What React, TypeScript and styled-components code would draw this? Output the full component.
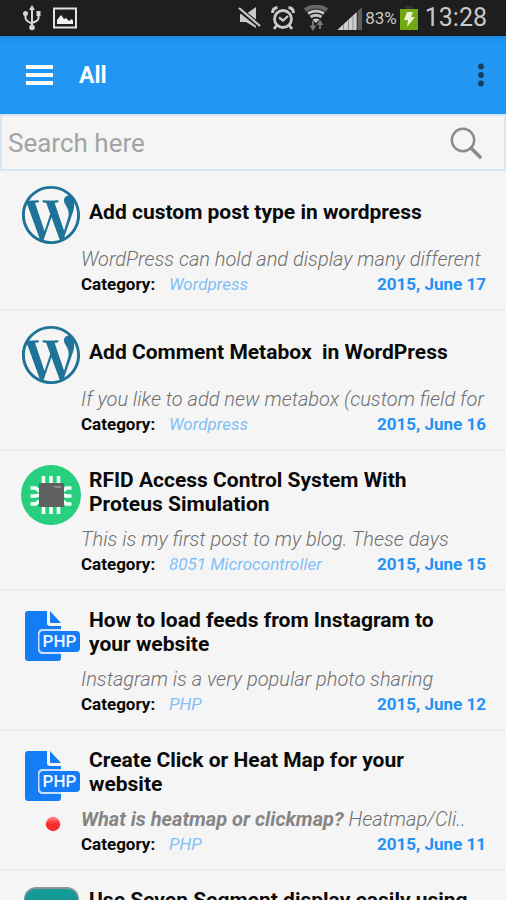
import React from 'react';
import styled, { createGlobalStyle } from 'styled-components';
import { FaWordpressSimple } from 'react-icons/fa';

const GlobalStyle = createGlobalStyle`
  *, *::before, *::after { box-sizing: border-box; }
  body { margin: 0; background: #f5f5f5; font-family: Roboto, "Liberation Sans", sans-serif; }
`;

const Screen = styled.div`
  display: flex;
  flex-direction: column;
  height: 100vh;
  overflow: hidden;
  background: #f5f5f5;
`;

const StatusBar = styled.div`
  display: flex;
  flex: none;
  align-items: center;
  justify-content: space-between;
  height: 36px;
  padding: 0 19px 0 22px;
  background: #1e1e1e;
  color: #c9c9c9;
  border-bottom: 1px solid #10171d;
`;

const StatusGroup = styled.div<{ $gap: number }>`
  display: flex;
  align-items: center;
  gap: ${(p) => p.$gap}px;
`;

const Battery = styled.div`
  display: flex;
  align-items: center;
  gap: 3px;
  margin-left: -7px;
  font-size: 17px;
`;

const Clock = styled.time`
  font-size: 25px;
  margin-left: -2px;
`;

const AppBar = styled.header`
  display: flex;
  flex: none;
  align-items: center;
  height: 78px;
  padding: 0 15px 0 20px;
  background: linear-gradient(#1f8be6, #2196f3 8px);
  color: #fff;
`;

const IconButton = styled.button`
  display: flex;
  align-items: center;
  justify-content: center;
  padding: 6px;
  border: 0;
  background: none;
  color: inherit;
  cursor: pointer;
`;

const Heading = styled.h1`
  flex: 1;
  margin: 0 0 0 20px;
  padding-top: 2px;
  font-size: 23px;
  font-weight: 700;
  line-height: 28px;
`;

const SearchBar = styled.form`
  display: flex;
  flex: none;
  align-items: center;
  height: 57px;
  padding: 0 16px 0 6px;
  border: 2px solid #d6e6f4;
`;

const SearchInput = styled.input`
  flex: 1;
  min-width: 0;
  padding: 0;
  border: 0;
  outline: 0;
  background: none;
  font-family: inherit;
  font-size: 26px;
  color: #444;
  &::placeholder { color: #a3a3a3; opacity: 1; }
`;

const PostList = styled.ul`
  flex: 1;
  min-height: 0;
  margin: 0;
  padding: 0;
  overflow-y: auto;
  scrollbar-width: none;
  list-style: none;
`;

const PostRow = styled.li`
  display: grid;
  grid-template-columns: 60px 1fr;
  grid-template-rows: 61px 26px 24px;
  height: 140px;
  padding: 14px 20px 12px 21px;
  border-bottom: 2px solid #ececec;
`;

const Thumb = styled.div`
  width: 60px;
  height: 60px;
  svg { display: block; }
`;

const Title = styled.h2`
  align-self: center;
  margin: 0;
  padding: 0 10px 8px 8px;
  font-size: 21px;
  font-weight: 700;
  line-height: 24px;
  color: #0a0a0a;
  white-space: pre-wrap;
`;

const Marker = styled.div`
  display: flex;
  align-items: center;
  padding: 10px 0 0 24px;
`;

const Excerpt = styled.p`
  grid-column: 2;
  align-self: center;
  margin: 0 -16px 0 0;
  overflow: hidden;
  font-size: 20px;
  font-weight: 300;
  font-style: italic;
  line-height: 24px;
  color: #6f6f6f;
  white-space: nowrap;
  strong { font-weight: 700; color: #858585; }
`;

const Meta = styled.div`
  grid-column: 2;
  display: flex;
  align-items: center;
  font-size: 17px;
  line-height: 24px;
  font-weight: 700;
`;

const Label = styled.span`
  width: 88px;
  color: #0a0a0a;
`;

const CategoryLink = styled.a`
  flex: 1;
  font-weight: 400;
  font-style: italic;
  color: #82bff6;
  text-decoration: none;
`;

const PostDate = styled.time`
  color: #2391f5;
`;

const UsbIcon = () => (
  <svg width="20" height="26" viewBox="0 0 20 26" fill="none" stroke="#d6d6d6" strokeWidth="2">
    <path d="M10 3v19M3.500 9v4q0 2 2 3l4.500 3M16.500 9v4q0 2-2 3L10 18" />
    <path d="M10 0l3 5H7z" fill="#d6d6d6" stroke="none" />
    <circle cx="10" cy="22.500" r="2.800" fill="#d6d6d6" stroke="none" />
    <circle cx="3.500" cy="8.500" r="2.500" fill="#d6d6d6" stroke="none" />
    <path d="M14.500 6h4v5h-4z" fill="#d6d6d6" stroke="none" />
  </svg>
);

const PictureIcon = () => (
  <svg width="24" height="22" viewBox="0 0 24 22">
    <rect x="1" y="1.500" width="22" height="19" fill="none" stroke="#e2e2e2" strokeWidth="2" />
    <path d="M4 17v-4l4-5 3 4 2-1 3 3 3-2 1 2v3z" fill="#f2f2f2" />
  </svg>
);

const MuteIcon = () => (
  <svg width="24" height="24" viewBox="0 0 24 24">
    <path d="M2 8h6l10-7v21l-10-6H2z" fill="#c9c9c9" />
    <path d="M1 3l21 17" stroke="#1e1e1e" strokeWidth="5" />
    <path d="M1 2l21 18" stroke="#c9c9c9" strokeWidth="2.200" />
  </svg>
);

const AlarmIcon = () => (
  <svg width="24" height="24" viewBox="0 0 24 24" fill="none" stroke="#c9c9c9">
    <circle cx="12" cy="13" r="8.500" strokeWidth="2.800" />
    <path d="M8 11.500l4 3 5-4.500" strokeWidth="2.200" />
    <path d="M1.500 7q0-5 5-5.500M22.500 7q0-5-5-5.500" strokeWidth="3" />
    <path d="M6 19l-3 4M18 19l3 4" strokeWidth="2.800" />
  </svg>
);

const WifiIcon = () => (
  <svg width="24" height="26" viewBox="0 0 24 26" fill="none">
    <path d="M1 5q11-7 22 0" stroke="#666" strokeWidth="4" />
    <path d="M4 8.500q8-5 16 0M6.500 12q5.500-3.500 11 0" stroke="#c4c4c4" strokeWidth="3" />
    <path d="M8.500 14.500q3.500-2 7 0L12 18z" fill="#c4c4c4" />
    <path d="M9 16v7M16 24v-7" stroke="#777" strokeWidth="2" />
    <path d="M5.500 20.500h7L9 26zM12.500 20h7L16 14.500z" fill="#777" />
  </svg>
);

const SignalIcon = () => (
  <svg width="26" height="24" viewBox="0 0 26 24">
    <path d="M0 24L19.500 6v18z" fill="#8e8e8e" />
    <path d="M1 24h5v-5zM7 24h4v-9.500l-4 3.500zM12 24h3.500V10.500L12 13.500zM16.500 24h3V6.500l-3 3z" fill="#cfcfcf" />
    <path d="M20.500 24H25V1l-4.500 4.500z" fill="#5d5d5d" />
  </svg>
);

const BatteryIcon = () => (
  <svg width="18" height="26" viewBox="0 0 18 26">
    <path d="M5 1h8v3H5z" fill="#333" />
    <path d="M0 4h18v21H0z" fill="#72a811" />
    <path d="M7 7h6l-2 5h4L7 22l1-7H4z" fill="#e9f4d2" />
  </svg>
);

const MenuIcon = () => (
  <svg width="27" height="20" viewBox="0 0 27 20" fill="#fff">
    <path d="M0 0h27v4H0zM0 8h27v4H0zM0 16h27v4H0z" />
  </svg>
);

const MoreIcon = () => (
  <svg width="8" height="24" viewBox="0 0 8 24" fill="#163f60">
    <circle cx="4" cy="3.500" r="2.900" />
    <circle cx="4" cy="12" r="2.900" />
    <circle cx="4" cy="20.500" r="2.900" />
  </svg>
);

const SearchIcon = () => (
  <svg width="32" height="32" viewBox="0 0 32 32" fill="none" stroke="#8b8b8b">
    <circle cx="13" cy="13" r="11.200" strokeWidth="2.400" />
    <path d="M21 21l9 9" strokeWidth="3.600" strokeLinecap="round" />
  </svg>
);

const ChipIcon = () => (
  <svg width="60" height="60" viewBox="0 0 60 60">
    <circle cx="30" cy="30" r="30" fill="#27cf7e" />
    <g fill="none" stroke="#f3fff8" strokeWidth="3.600">
      <path d="M22.500 11v38M30 11v38M37.500 11v38" />
      <path d="M9.500 23h5l4 3M9.500 31h5l4-1M9.500 39h5l4-3M50.500 23h-5l-4 3M50.500 31h-5l-4-1M50.500 39h-5l-4-3" />
    </g>
    <rect x="18" y="18" width="25" height="24" rx="1" fill="#5f6062" />
    <path d="M31 21h9v2h-5z" fill="#8a8a8c" />
  </svg>
);

const PhpIcon = () => (
  <svg width="60" height="60" viewBox="0 0 60 60">
    <path d="M7 6h19v12q0 3 3 3h11v32q0 3-3 3H7q-3 0-3-3V9q0-3 3-3z" fill="#157cf8" />
    <path d="M29 6l11 12H30q-1 0-1-1z" fill="#157cf8" />
    <rect x="17" y="24" width="43" height="25" rx="5" fill="#f5f5f5" />
    <path d="M40 24H22q-5 0-5 5v15q0 5 5 5h18z" fill="#c8e0fb" />
    <rect x="18.500" y="26" width="40.500" height="21" rx="4" fill="#157cf8" />
    <text x="38.500" y="42" textAnchor="middle" fontFamily="Roboto, sans-serif" fontSize="17" fontWeight="500" fill="#eef6ff">PHP</text>
  </svg>
);

const DisplayIcon = () => (
  <svg width="60" height="60" viewBox="0 0 60 60">
    <defs>
      <linearGradient id="teal" x1="0" y1="0" x2="0" y2="1">
        <stop offset="0" stopColor="#159d9b" />
        <stop offset="1" stopColor="#0b7f7e" />
      </linearGradient>
    </defs>
    <rect x="3" y="2" width="55" height="58" rx="12" fill="#8b9696" />
    <rect x="4" y="4" width="53" height="55" rx="11" fill="url(#teal)" />
  </svg>
);

const RecordDot = () => (
  <svg width="16" height="16" viewBox="0 0 16 16">
    <defs>
      <linearGradient id="red" x1="0" y1="0" x2="0" y2="1">
        <stop offset="0" stopColor="#ff8a8a" />
        <stop offset="0.500" stopColor="#fb2a2a" />
        <stop offset="1" stopColor="#ee3030" />
      </linearGradient>
    </defs>
    <circle cx="8" cy="8" r="7.200" fill="url(#red)" />
  </svg>
);

type Post = {
  icon: React.ReactNode;
  title: string;
  excerpt: React.ReactNode;
  category: string;
  date: string;
  marked?: boolean;
};

const wordpress = <FaWordpressSimple size={60} color="#1f7399" />;

const posts: Post[] = [
  { icon: wordpress, title: 'Add custom post type in wordpress', excerpt: 'WordPress can hold and display many different', category: 'Wordpress', date: '2015, June 17' },
  { icon: wordpress, title: 'Add Comment Metabox  in WordPress', excerpt: 'If you like to add new metabox (custom field for', category: 'Wordpress', date: '2015, June 16' },
  { icon: <ChipIcon />, title: 'RFID Access Control System With\nProteus Simulation', excerpt: 'This is my first post to my blog. These days', category: '8051 Microcontroller', date: '2015, June 15' },
  { icon: <PhpIcon />, title: 'How to load feeds from Instagram to\nyour website', excerpt: 'Instagram is a very popular photo sharing', category: 'PHP', date: '2015, June 12' },
  { icon: <PhpIcon />, title: 'Create Click or Heat Map for your\nwebsite', excerpt: <><strong>What is heatmap or clickmap?</strong> Heatmap/Cli..</>, category: 'PHP', date: '2015, June 11', marked: true },
  { icon: <DisplayIcon />, title: 'Use Seven Segment display easily using\n ', excerpt: '', category: '', date: '' },
];

const PostItem = ({ post }: { post: Post }) => (
  <PostRow>
    <Thumb>{post.icon}</Thumb>
    <Title>{post.title}</Title>
    {post.marked && <Marker><RecordDot /></Marker>}
    <Excerpt>{post.excerpt}</Excerpt>
    {post.category && (
      <Meta>
        <Label>Category:</Label>
        <CategoryLink href="#">{post.category}</CategoryLink>
        <PostDate>{post.date}</PostDate>
      </Meta>
    )}
  </PostRow>
);

export default function App() {
  return (
    <Screen>
      <GlobalStyle />
      <StatusBar>
        <StatusGroup $gap={11}>
          <UsbIcon />
          <PictureIcon />
        </StatusGroup>
        <StatusGroup $gap={9}>
          <MuteIcon />
          <AlarmIcon />
          <WifiIcon />
          <SignalIcon />
          <Battery>83%<BatteryIcon /></Battery>
          <Clock>13:28</Clock>
        </StatusGroup>
      </StatusBar>
      <AppBar>
        <IconButton type="button" aria-label="Open menu"><MenuIcon /></IconButton>
        <Heading>All</Heading>
        <IconButton type="button" aria-label="More options"><MoreIcon /></IconButton>
      </AppBar>
      <SearchBar onSubmit={(e) => e.preventDefault()}>
        <SearchInput type="text" placeholder="Search here" aria-label="Search here" />
        <IconButton type="submit" aria-label="Search"><SearchIcon /></IconButton>
      </SearchBar>
      <PostList>
        {posts.map((post) => <PostItem key={post.title} post={post} />)}
      </PostList>
    </Screen>
  );
}
